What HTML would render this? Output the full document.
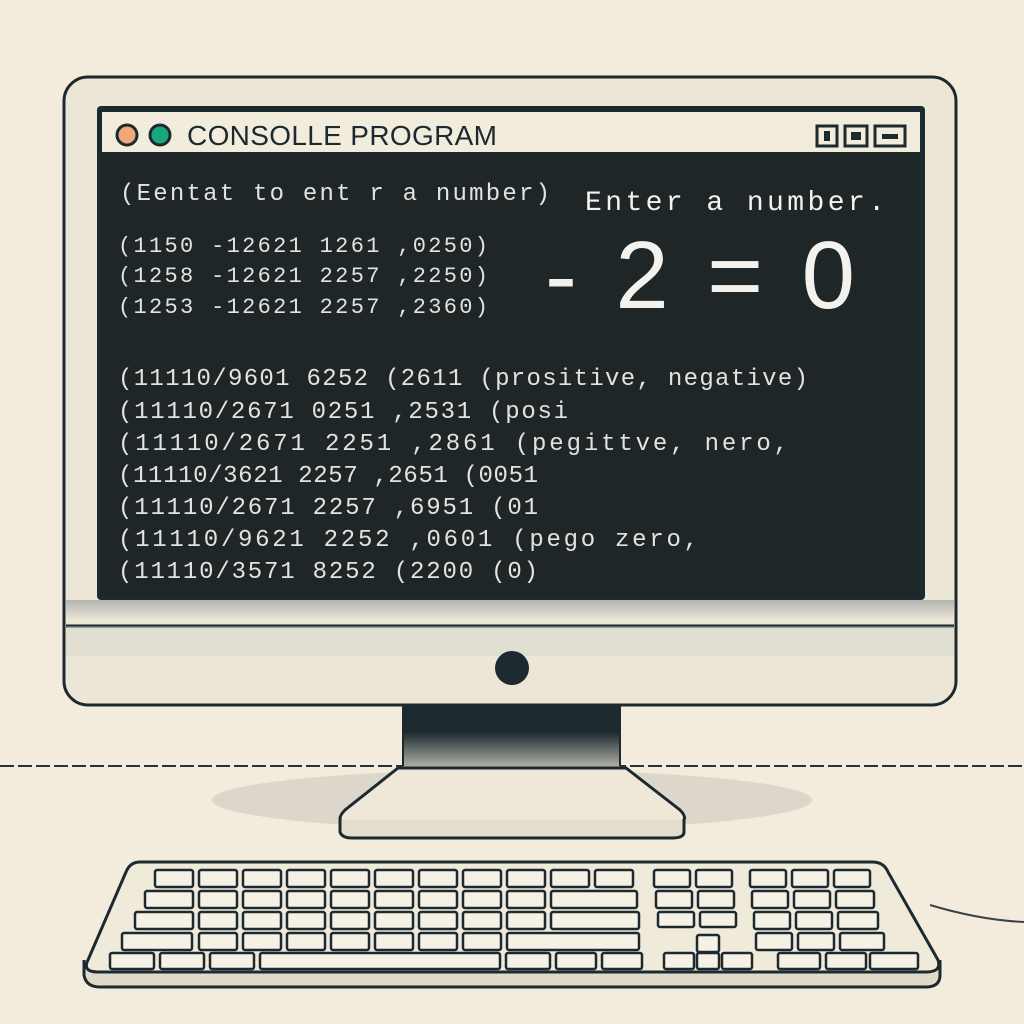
<!DOCTYPE html><html><head><style>
body{margin:0;width:1024px;height:1024px;background:#f3ecdd;overflow:hidden}
svg{position:absolute;left:0;top:0}
.m{font-family:"Liberation Mono",monospace;fill:#e4e2dc}
</style></head><body>
<svg width="1024" height="1024" viewBox="0 0 1024 1024">
<defs>
<linearGradient id="neck" x1="0" y1="0" x2="0" y2="1"><stop offset="0" stop-color="#1c2a30"/><stop offset=".4" stop-color="#1c2a30"/><stop offset="1" stop-color="#e9e2d2"/></linearGradient>
<linearGradient id="chin" x1="0" y1="0" x2="0" y2="1"><stop offset="0" stop-color="#9aa0a0"/><stop offset=".5" stop-color="#ece6d6"/></linearGradient>
</defs>
<rect width="1024" height="1024" fill="#f3ecdd"/>
<line x1="0" y1="766" x2="1024" y2="766" stroke="#2a3438" stroke-width="2" stroke-dasharray="14 4"/>
<ellipse cx="512" cy="800" rx="300" ry="30" fill="#cfcac0" opacity=".6"/>
<!-- stand -->
<rect x="403" y="700" width="217" height="80" fill="url(#neck)"/>
<line x1="403" y1="700" x2="403" y2="766" stroke="#1c2a30" stroke-width="2"/>
<line x1="620" y1="700" x2="620" y2="766" stroke="#1c2a30" stroke-width="2"/>
<path d="M398 768 L345 810 Q335 820 345 824 L678 824 Q690 820 680 810 L626 768 Z" fill="#efe8d8" stroke="#1c2a30" stroke-width="3"/>
<path d="M340 820 L340 832 Q342 838 352 838 L672 838 Q684 838 684 832 L684 820" fill="#e4ddcd" stroke="#1c2a30" stroke-width="3"/>
<!-- monitor -->
<rect x="64" y="77" width="892" height="628" rx="24" fill="#ece6d6" stroke="#1c2a30" stroke-width="3"/>
<rect x="66" y="600" width="888" height="40" fill="url(#chin)" opacity=".7"/>
<line x1="66" y1="626" x2="954" y2="626" stroke="#1c2a30" stroke-width="3"/>
<rect x="66" y="626" width="888" height="30" fill="#cfd0cc" opacity=".35"/>
<circle cx="512" cy="668" r="17" fill="#1c2a30"/>
<rect x="97" y="106" width="828" height="494" rx="4" fill="#1c2a30"/>
<rect x="102" y="112" width="818" height="40" fill="#f2ecdc"/>
<rect x="102" y="152" width="818" height="444" fill="#1f2628"/>
<circle cx="127" cy="135" r="10" fill="#f0a77a" stroke="#1c2a30" stroke-width="3"/>
<circle cx="160" cy="135" r="10" fill="#1aa77c" stroke="#1c2a30" stroke-width="3"/>
<text x="187" y="145" font-family="Liberation Sans,sans-serif" font-size="28" fill="#1c2a30" textLength="310">CONSOLLE  PROGRAM</text>
<rect x="817" y="126" width="20" height="20" fill="none" stroke="#1c2a30" stroke-width="3"/><rect x="824" y="131" width="6" height="10" fill="#1c2a30"/>
<rect x="845" y="126" width="22" height="20" fill="none" stroke="#1c2a30" stroke-width="3"/><rect x="851" y="132" width="10" height="8" fill="#1c2a30"/>
<rect x="875" y="126" width="30" height="20" fill="none" stroke="#1c2a30" stroke-width="3"/><rect x="882" y="134" width="16" height="5" fill="#1c2a30"/>
<text class="m" x="120" y="200" font-size="24" textLength="430">(Eentat to ent r a number)</text>
<text x="585" y="210" font-family="Liberation Mono,monospace" font-size="28" fill="#f4f2ec" textLength="300">Enter a number.</text>
<text class="m" x="118" y="252" font-size="22" textLength="370">(1150 -12621 1261  ,0250)</text>
<text class="m" x="118" y="282" font-size="22" textLength="370">(1258 -12621 2257  ,2250)</text>
<text class="m" x="118" y="313" font-size="22" textLength="370">(1253 -12621 2257  ,2360)</text>
<text x="545" y="308" font-family="Liberation Sans,sans-serif" font-size="96" fill="#f4f2ec" textLength="310">- 2 = 0</text>
<text class="m" x="118" y="385" font-size="24" textLength="690">(11110/9601 6252  (2611 (prositive, negative)</text>
<text class="m" x="118" y="418" font-size="24" textLength="450">(11110/2671 0251  ,2531 (posi</text>
<text class="m" x="118" y="450" font-size="24" textLength="670">(11110/2671 2251  ,2861 (pegittve,  nero,</text>
<text class="m" x="118" y="482" font-size="24" textLength="420">(11110/3621 2257  ,2651 (0051</text>
<text class="m" x="118" y="514" font-size="24" textLength="420">(11110/2671 2257  ,6951 (01</text>
<text class="m" x="118" y="546" font-size="24" textLength="580">(11110/9621 2252  ,0601 (pego  zero,</text>
<text class="m" x="118" y="578" font-size="24" textLength="420">(11110/3571 8252  (2200 (0)</text>
<!-- keyboard -->
<path d="M84 960 L84 975 Q86 987 100 987 L926 987 Q940 987 940 975 L940 960" fill="#e0dacb" stroke="#1c2a30" stroke-width="3"/>
<path d="M140 862 L872 862 Q884 862 888 872 L938 960 Q942 972 926 972 L98 972 Q82 972 88 960 L126 872 Q130 862 140 862 Z" fill="#f0eadb" stroke="#1c2a30" stroke-width="3"/>
<g fill="#f6f1e5" stroke="#1c2a30" stroke-width="2.5">
<rect x="155" y="870" width="38" height="17" rx="2"/><rect x="199" y="870" width="38" height="17" rx="2"/><rect x="243" y="870" width="38" height="17" rx="2"/><rect x="287" y="870" width="38" height="17" rx="2"/><rect x="331" y="870" width="38" height="17" rx="2"/><rect x="375" y="870" width="38" height="17" rx="2"/><rect x="419" y="870" width="38" height="17" rx="2"/><rect x="463" y="870" width="38" height="17" rx="2"/><rect x="507" y="870" width="38" height="17" rx="2"/><rect x="551" y="870" width="38" height="17" rx="2"/><rect x="595" y="870" width="38" height="17" rx="2"/>
<rect x="145" y="891" width="48" height="17" rx="2"/><rect x="199" y="891" width="38" height="17" rx="2"/><rect x="243" y="891" width="38" height="17" rx="2"/><rect x="287" y="891" width="38" height="17" rx="2"/><rect x="331" y="891" width="38" height="17" rx="2"/><rect x="375" y="891" width="38" height="17" rx="2"/><rect x="419" y="891" width="38" height="17" rx="2"/><rect x="463" y="891" width="38" height="17" rx="2"/><rect x="507" y="891" width="38" height="17" rx="2"/><rect x="551" y="891" width="86" height="17" rx="2"/>
<rect x="135" y="912" width="58" height="17" rx="2"/><rect x="199" y="912" width="38" height="17" rx="2"/><rect x="243" y="912" width="38" height="17" rx="2"/><rect x="287" y="912" width="38" height="17" rx="2"/><rect x="331" y="912" width="38" height="17" rx="2"/><rect x="375" y="912" width="38" height="17" rx="2"/><rect x="419" y="912" width="38" height="17" rx="2"/><rect x="463" y="912" width="38" height="17" rx="2"/><rect x="507" y="912" width="38" height="17" rx="2"/><rect x="551" y="912" width="88" height="17" rx="2"/>
<rect x="122" y="933" width="70" height="17" rx="2"/><rect x="199" y="933" width="38" height="17" rx="2"/><rect x="243" y="933" width="38" height="17" rx="2"/><rect x="287" y="933" width="38" height="17" rx="2"/><rect x="331" y="933" width="38" height="17" rx="2"/><rect x="375" y="933" width="38" height="17" rx="2"/><rect x="419" y="933" width="38" height="17" rx="2"/><rect x="463" y="933" width="38" height="17" rx="2"/><rect x="507" y="933" width="132" height="17" rx="2"/>
<rect x="110" y="953" width="44" height="16" rx="2"/><rect x="160" y="953" width="44" height="16" rx="2"/><rect x="210" y="953" width="44" height="16" rx="2"/><rect x="260" y="953" width="240" height="16" rx="2"/><rect x="506" y="953" width="44" height="16" rx="2"/><rect x="556" y="953" width="40" height="16" rx="2"/><rect x="602" y="953" width="40" height="16" rx="2"/>
<rect x="654" y="870" width="36" height="17" rx="2"/><rect x="696" y="870" width="36" height="17" rx="2"/>
<rect x="656" y="891" width="36" height="17" rx="2"/><rect x="698" y="891" width="36" height="17" rx="2"/>
<rect x="658" y="912" width="36" height="15" rx="2"/><rect x="700" y="912" width="36" height="15" rx="2"/>
<rect x="697" y="935" width="22" height="17" rx="2"/>
<rect x="664" y="953" width="30" height="16" rx="2"/><rect x="697" y="953" width="22" height="16" rx="2"/><rect x="722" y="953" width="30" height="16" rx="2"/>
<rect x="750" y="870" width="36" height="17" rx="2"/><rect x="792" y="870" width="36" height="17" rx="2"/><rect x="834" y="870" width="36" height="17" rx="2"/>
<rect x="752" y="891" width="36" height="17" rx="2"/><rect x="794" y="891" width="36" height="17" rx="2"/><rect x="836" y="891" width="38" height="17" rx="2"/>
<rect x="754" y="912" width="36" height="17" rx="2"/><rect x="796" y="912" width="36" height="17" rx="2"/><rect x="838" y="912" width="40" height="17" rx="2"/>
<rect x="756" y="933" width="36" height="17" rx="2"/><rect x="798" y="933" width="36" height="17" rx="2"/><rect x="840" y="933" width="44" height="17" rx="2"/>
<rect x="778" y="953" width="42" height="16" rx="2"/><rect x="826" y="953" width="40" height="16" rx="2"/><rect x="870" y="953" width="48" height="16" rx="2"/>
</g>
<path d="M930 905 Q980 920 1024 922" fill="none" stroke="#3a4448" stroke-width="2"/>
</svg>
</body></html>
